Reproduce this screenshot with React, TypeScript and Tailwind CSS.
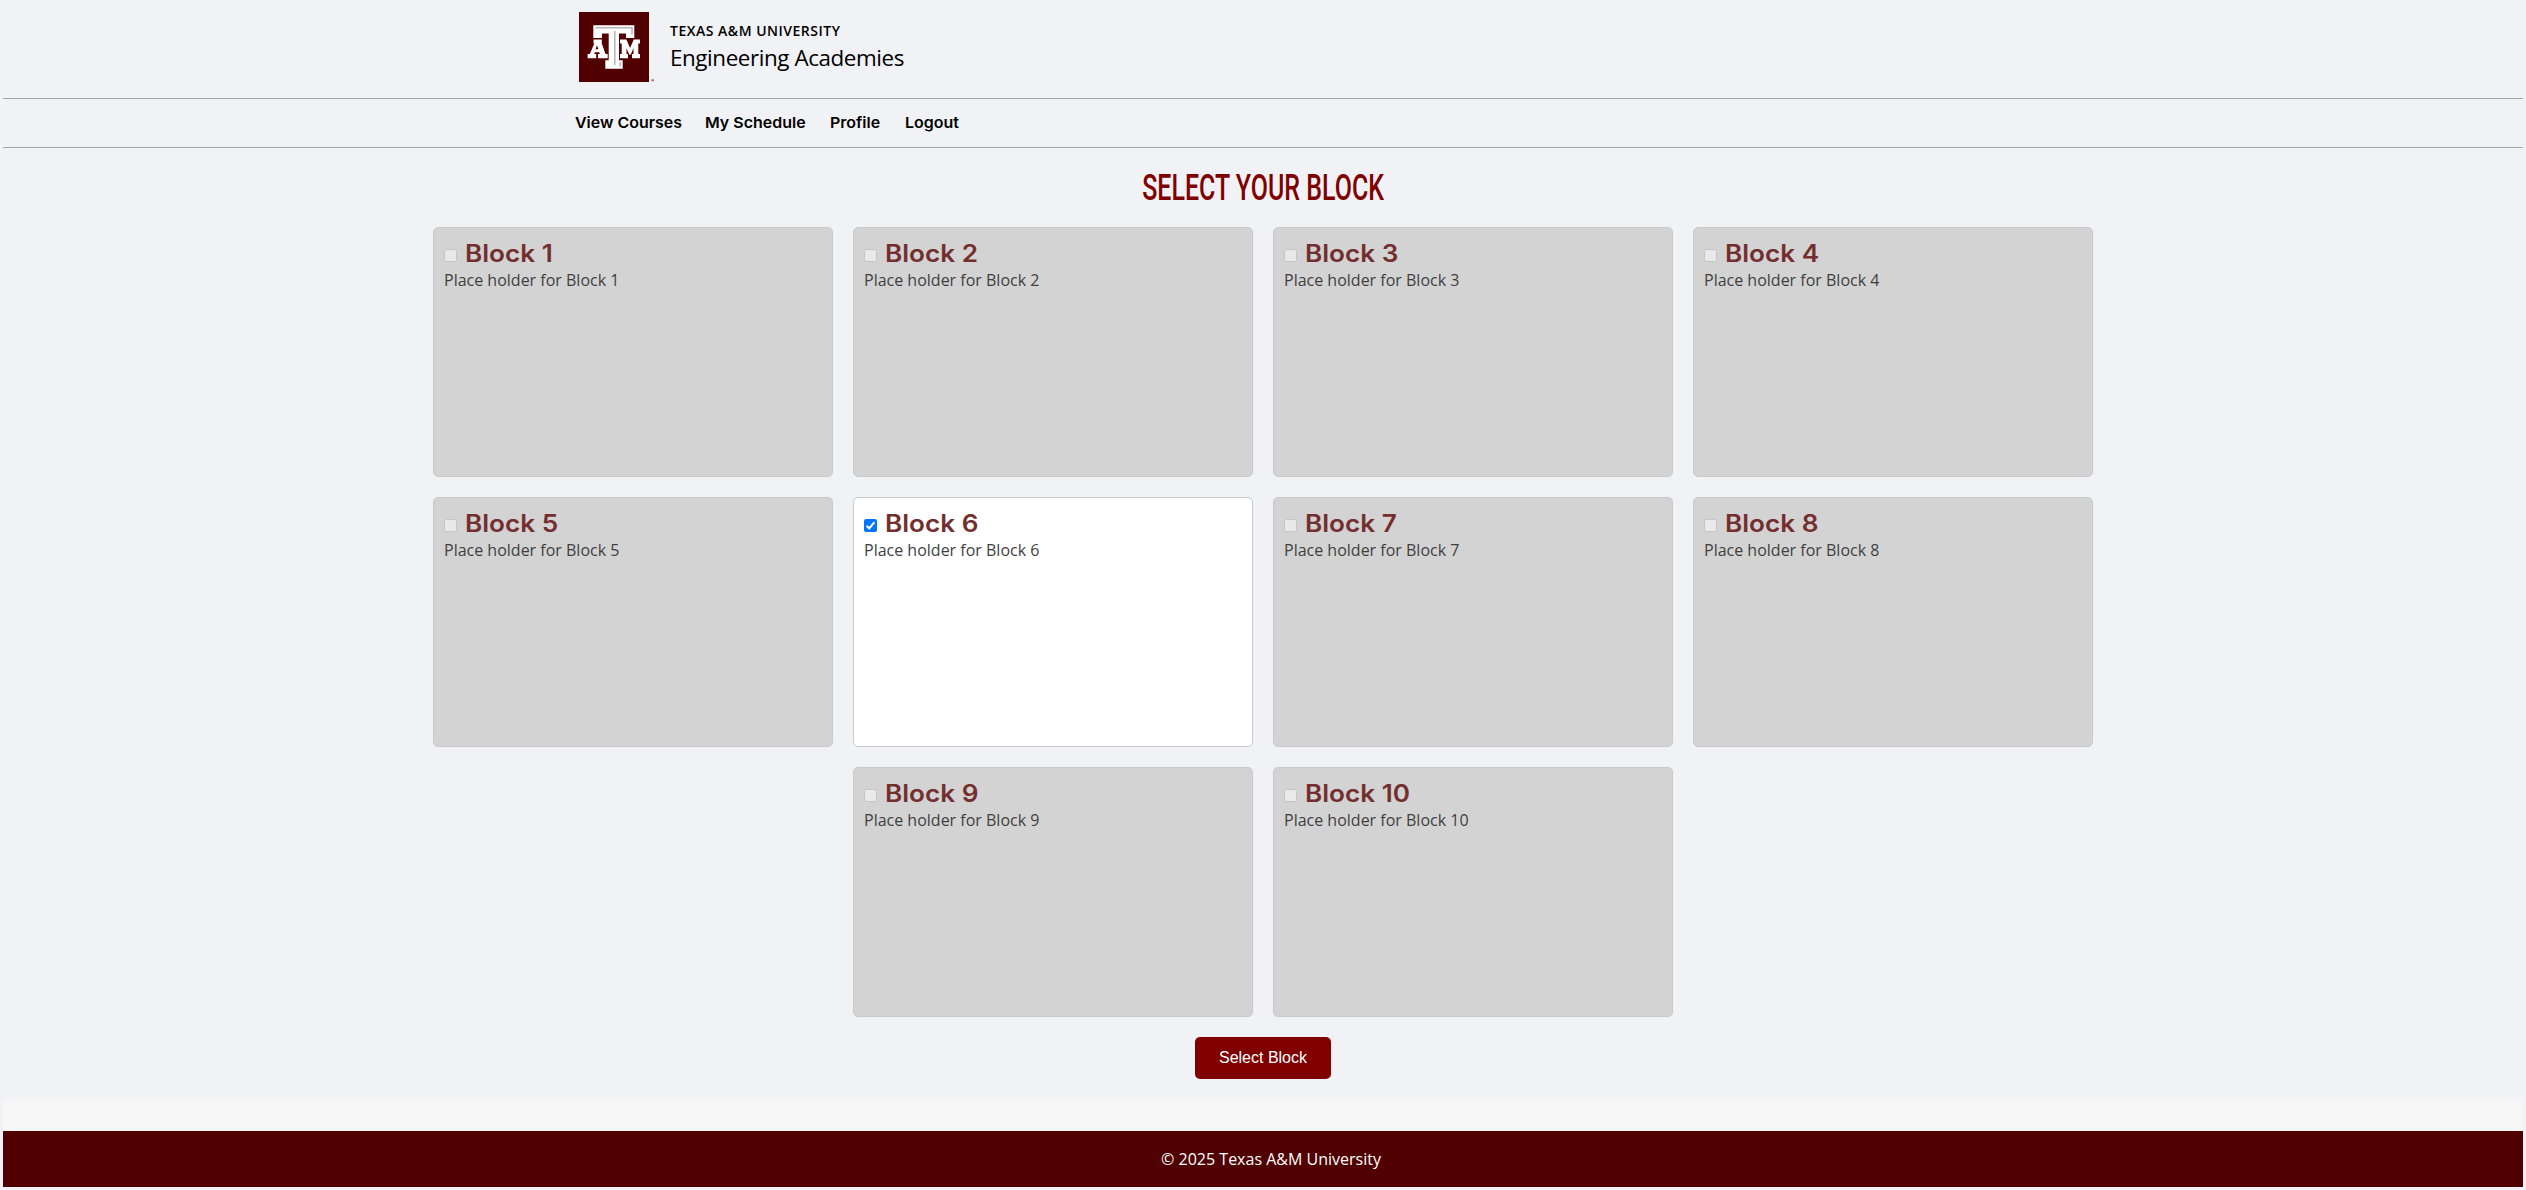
import React from 'react';

const blocks = [1, 2, 3, 4, 5, 6, 7, 8, 9, 10];
const selected = 6;

const navItems = [
  { label: 'View Courses', width: 'w-[130px]' },
  { label: 'My Schedule', width: 'w-[125px]' },
  { label: 'Profile', width: 'w-[75px]' },
  { label: 'Logout', width: 'w-[60px]' },
];

function Logo() {
  return (
    <svg width="76" height="70" viewBox="0 0 76 70" className="block shrink-0">
      <rect width="70" height="70" fill="#500000" />
      <path d="M14.3 13.3H55.3V26H47V21.5H40V48.3H43.7V56.7H26.3V48.3H29.7V21.5H23V26H14.3Z" fill="#fff" />
      <path d="M16.5 15.8H53V22.5M35.8 19V53M41.2 50V54.5" fill="none" stroke="#b9b3b3" strokeWidth="1.5" />
      <path
        fillRule="evenodd"
        d="M14.5 27.5H22.8V31.5L26.5 42H28.7V46.3H19V42H20.8L20.3 40.3H15.8L15.3 42H17.2V46.3H8.6V42H10.8L15.3 31.5H14.5ZM18 33.2L16.6 37.3H19.4Z"
        fill="#fff"
      />
      <path
        d="M41 27.5H47.4L51.1 36L54.7 27.5H61V31.5H59.3V42H61V46.3H53V42H54.5V36.2L51.8 42.5H50.2L47.5 36.2V42H49V46.3H41V42H42.7V31.5H41Z"
        fill="#fff"
      />
      <circle cx="73.7" cy="68.3" r="1.2" fill="#a0707a" />
    </svg>
  );
}

function Checkbox({ checked }: { checked: boolean }) {
  return checked ? (
    <span className="mt-[3px] block h-[13px] w-[13px] shrink-0 rounded-[2px] bg-[#0075ff]">
      <svg width="13" height="13" viewBox="0 0 13 13" className="block">
        <path d="M2.6 6.8L5.2 9.4L10.4 3.2" fill="none" stroke="#fff" strokeWidth="2" />
      </svg>
    </span>
  ) : (
    <span className="mt-[3px] block h-[13px] w-[13px] shrink-0 rounded-[2.5px] border border-[#c4c4c4] bg-[#e9e9e9]" />
  );
}

function BlockCard({ n }: { n: number }) {
  const active = n === selected;
  return (
    <div
      className={
        active
          ? 'h-[250px] w-[400px] rounded-[5px] border border-[#c8cacb] bg-white px-[10px] pt-[11px]'
          : 'h-[250px] w-[400px] rounded-[5px] border border-[#c9c9c9] bg-[#d3d3d3] px-[10px] pt-[11px]'
      }
    >
      <div className="flex h-[30px] items-center">
        <Checkbox checked={active} />
        <h2 className="ml-[8px] origin-left scale-x-[1.09] whitespace-nowrap font-['Inter'] text-[24px] leading-[30px] font-semibold text-[#732f2f]">
          Block {n}
        </h2>
      </div>
      <p className="h-[22px] font-['Open_Sans'] text-[16px] leading-[22px] text-[#3f3f3f]">Place holder for Block {n}</p>
    </div>
  );
}

export default function App() {
  return (
    <div className="h-[1190px] w-full bg-[#f0f2f6] px-[3px] font-['Open_Sans',sans-serif]">
      <header className="flex h-[98px] pt-[12px] pl-[576px]">
        <Logo />
        <div className="pl-[15px]">
          <div className="mt-[10px] text-[14px] leading-[18px] font-semibold tracking-[0.5px] whitespace-nowrap text-black">
            TEXAS A&amp;M UNIVERSITY
          </div>
          <div className="text-[22.4px] leading-[35px] tracking-[-0.41px] whitespace-nowrap text-black">Engineering Academies</div>
        </div>
      </header>
      <nav className="flex h-[50px] items-center border-y border-[#a3a5a8] pl-[572px]">
        {navItems.map((item) => (
          <a key={item.label} className={`${item.width} shrink-0 origin-left scale-x-[1.065] whitespace-nowrap font-['Inter'] text-[15px] font-semibold text-black`}>
            {item.label}
          </a>
        ))}
      </nav>
      <main className="h-[951px]">
        <h1 className="flex h-[79px] items-center justify-center font-['Roboto'] text-[37px] font-medium text-[#800000]">
          <span className="inline-block origin-center scale-x-[0.675] whitespace-nowrap">SELECT YOUR BLOCK</span>
        </h1>
        <div className="mx-auto flex w-[1660px] flex-wrap justify-center gap-[20px]">
          {blocks.map((n) => (
            <BlockCard key={n} n={n} />
          ))}
        </div>
        <button className="mx-auto mt-[20px] block h-[42px] w-[136px] rounded-[5px] bg-[#800000] font-['Liberation_Sans'] text-[16px] text-white">
          Select Block
        </button>
      </main>
      <div className="h-[32px] bg-[#f6f6f6]" />
      <footer className="flex h-[56px] items-center justify-center bg-[#500000] pl-[16px] text-[16px] text-white">
        © 2025 Texas A&amp;M University
      </footer>
    </div>
  );
}
